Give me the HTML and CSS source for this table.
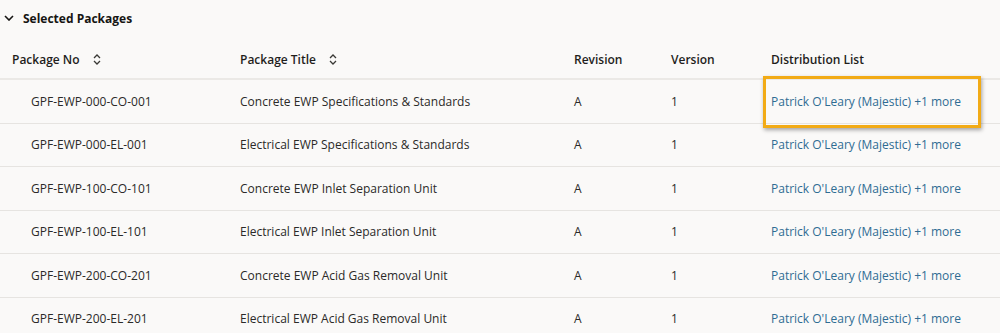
FILE: index.html
```html
<!DOCTYPE html>
<html lang="en">
<head>
<meta charset="utf-8">
<title>Selected Packages</title>
<link rel="stylesheet" href="styles.css">
</head>
<body>
<section class="panel">
  <header class="panel-head">
    <svg class="chev" width="10" height="6" viewBox="0 0 10 6"><path d="M1 1l4 4 4-4" fill="none" stroke="#161513" stroke-width="1.6"/></svg>
    <span>Selected Packages</span>
  </header>
  <table class="grid">
    <colgroup>
      <col class="c1"><col class="c2"><col class="c3"><col class="c4"><col class="c5">
    </colgroup>
    <thead>
      <tr>
        <th>Package No <svg class="sort" width="8" height="11" viewBox="0 0 8 11"><path d="M1 4l3-3 3 3M1 7l3 3 3-3" fill="none" stroke="#3a3936" stroke-width="1.3"/></svg></th>
        <th>Package Title <svg class="sort" width="8" height="11" viewBox="0 0 8 11"><path d="M1 4l3-3 3 3M1 7l3 3 3-3" fill="none" stroke="#3a3936" stroke-width="1.3"/></svg></th>
        <th>Revision</th>
        <th>Version</th>
        <th>Distribution List</th>
      </tr>
    </thead>
    <tbody>
      <tr><td class="no">GPF-EWP-000-CO-001</td><td>Concrete EWP Specifications &amp; Standards</td><td>A</td><td>1</td><td class="dist"><a href="#">Patrick O'Leary (Majestic) +1 more</a><span class="focus-ring"></span></td></tr>
      <tr><td class="no">GPF-EWP-000-EL-001</td><td>Electrical EWP Specifications &amp; Standards</td><td>A</td><td>1</td><td class="dist"><a href="#">Patrick O'Leary (Majestic) +1 more</a></td></tr>
      <tr><td class="no">GPF-EWP-100-CO-101</td><td>Concrete EWP Inlet Separation Unit</td><td>A</td><td>1</td><td class="dist"><a href="#">Patrick O'Leary (Majestic) +1 more</a></td></tr>
      <tr><td class="no">GPF-EWP-100-EL-101</td><td>Electrical EWP Inlet Separation Unit</td><td>A</td><td>1</td><td class="dist"><a href="#">Patrick O'Leary (Majestic) +1 more</a></td></tr>
      <tr><td class="no">GPF-EWP-200-CO-201</td><td>Concrete EWP Acid Gas Removal Unit</td><td>A</td><td>1</td><td class="dist"><a href="#">Patrick O'Leary (Majestic) +1 more</a></td></tr>
      <tr><td class="no">GPF-EWP-200-EL-201</td><td>Electrical EWP Acid Gas Removal Unit</td><td>A</td><td>1</td><td class="dist"><a href="#">Patrick O'Leary (Majestic) +1 more</a></td></tr>
    </tbody>
  </table>
</section>
</body>
</html>
```
FILE: styles.css
```css
html, body {
  margin: 0;
  background: #faf9f8;
}
body {
  font-family: "Open Sans", "Noto Sans", sans-serif;
  font-size: 12px;
  color: #161513;
}
.panel-head {
  display: flex;
  align-items: center;
  gap: 9px;
  height: 36px;
  padding-left: 4px;
  font-weight: 700;
  font-size: 12px;
}
.grid {
  width: 1000px;
  border-collapse: collapse;
  table-layout: fixed;
}
.c1 { width: 228px; }
.c2 { width: 334px; }
.c3 { width: 97px; }
.c4 { width: 100px; }
.c5 { width: 241px; }
.grid th {
  text-align: left;
  font-weight: 600;
  color: #1f1e1c;
  height: 37px;
  padding: 5px 12px 0;
  border-bottom: 2px solid #ebe9e6;
  white-space: nowrap;
}
.sort {
  margin-left: 10px;
  vertical-align: -1px;
}
.grid td {
  height: 42.5px;
  padding: 0 12px;
  border-bottom: 1px solid #e6e4e1;
  white-space: nowrap;
  color: #2b2a28;
}
.grid td.no { padding-left: 31px; }
.dist { position: relative; }
.dist a {
  color: #2f6c93;
  text-decoration: none;
}
.focus-ring {
  position: absolute;
  left: 4px;
  right: 19px;
  top: -4px;
  bottom: -5px;
  border: 3px solid #f2ab16;
  box-shadow: 1px 2px 4px rgba(0, 0, 0, 0.35);
}
```
